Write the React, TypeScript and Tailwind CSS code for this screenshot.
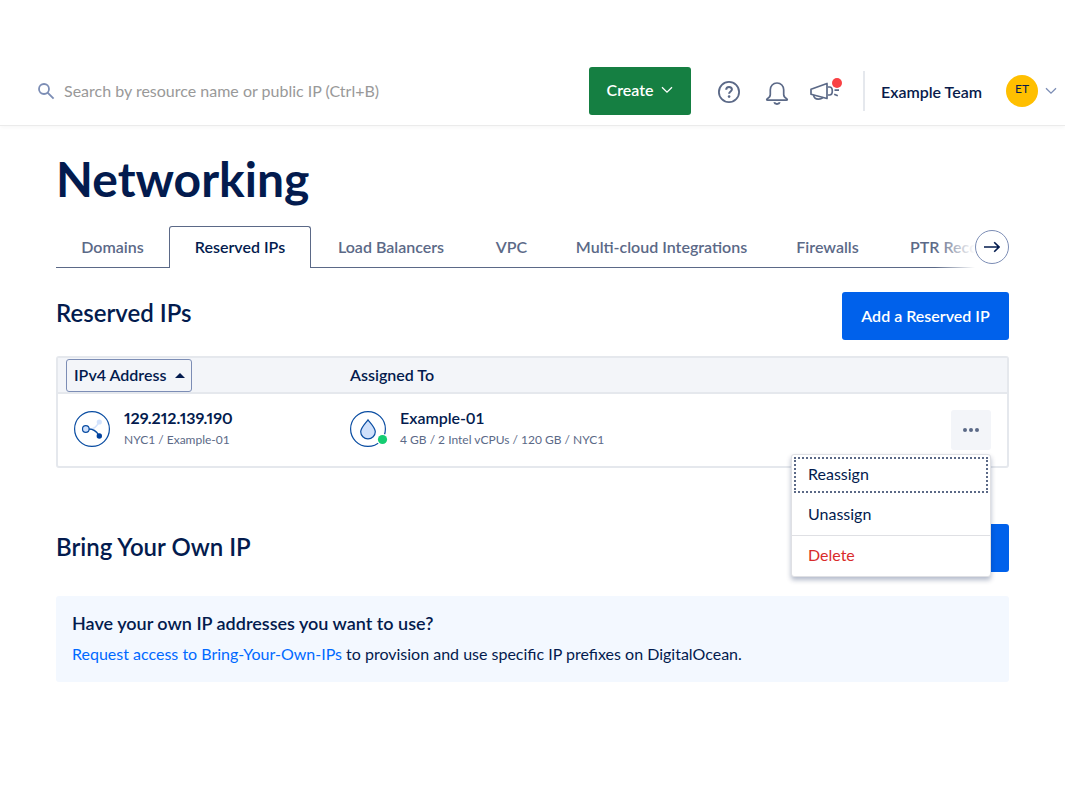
import { useState } from "react";
import clsx from "clsx";

const tabs = [
  { label: "Domains", width: "w-[113px]" },
  { label: "Reserved IPs", width: "w-[142px]" },
  { label: "Load Balancers", width: "w-40" },
  { label: "VPC", width: "w-[81px]" },
  { label: "Multi-cloud Integrations", width: "w-[219px]" },
  { label: "Firewalls", width: "w-[113px]" },
  { label: "PTR Records", width: "w-[142px]" },
];

function Chevron({ className }: { className?: string }) {
  return (
    <svg className={className} width="12" height="8" viewBox="0 0 12 8" fill="none" stroke="currentColor" strokeWidth="1.3">
      <path d="M1 1.2l5 5 5-5" />
    </svg>
  );
}

function Header() {
  return (
    <header className="mt-14 flex h-[70px] items-center border-b border-[#ebebeb] pr-2 pl-[38px] shadow-[0_2px_4px_rgba(0,0,0,0.03)]">
      <label htmlFor="search" aria-label="Search" className="pt-0.5 text-[#7c8db5]">
        <svg width="17" height="17" viewBox="0 0 17 17" fill="none" stroke="currentColor">
          <circle cx="6" cy="6" r="5" strokeWidth="1.8" />
          <path d="M9.6 9.6l6 6" strokeWidth="1.8" />
        </svg>
      </label>
      <input
        id="search"
        type="text"
        placeholder="Search by resource name or public IP (Ctrl+B)"
        className="ml-[9px] min-w-0 flex-1 text-base text-[#031b4e] outline-none placeholder:text-[#999]"
      />
      <button className="flex h-12 w-[102px] shrink-0 items-center justify-center gap-2 rounded-[3px] bg-[#157f42] pb-0.5 text-base font-semibold text-white">
        Create
        <Chevron />
      </button>
      <button aria-label="Help" className="ml-[26px] pt-0.5 text-[#5b6987]">
        <svg width="24" height="24" viewBox="0 0 24 24" fill="none" stroke="currentColor" strokeWidth="1.8">
          <circle cx="12" cy="12" r="10.1" />
          <path d="M9.2 9.8c0-1.7 1.1-2.8 2.8-2.8s2.9 1 2.9 2.5c0 1.9-2.8 2-2.8 4.3" strokeWidth="2" />
          <circle cx="12.1" cy="16.6" r="1.3" fill="currentColor" stroke="none" />
        </svg>
      </button>
      <button aria-label="Notifications" className="ml-6 pt-1 text-[#5b6987]">
        <svg width="24" height="24" viewBox="0 0 24 24" fill="none" stroke="currentColor" strokeWidth="1.7">
          <path d="M12 2C8 2 5.3 5 5.3 8.8V13.5C5.3 15.500 4.300 16.600 2.600 17.400C1.300 18.100 1.500 19.200 2.700 19.200H21.300C22.500 19.200 22.700 18.100 21.400 17.400C19.700 16.600 18.700 15.500 18.700 13.500V8.800C18.700 5 16 2 12 2Z" />
          <path d="M9.2 21.200a2.900 2.300 0 0 0 5.600 0" strokeWidth="2" />
        </svg>
      </button>
      <button aria-label="What's new" className="ml-5 text-[#5b6987]">
        <svg width="34" height="30" viewBox="0 0 34 30" fill="none" stroke="currentColor" strokeWidth="1.7">
          <path d="M2 13.300L18 7.500V22.500L2 18.200Z" strokeLinejoin="round" />
          <path d="M19 11h1.500c1.700 0 2.800 1.800 2.800 4s-1.100 4-2.800 4H19" />
          <path d="M4.600 19.200c.3 2.300 2 4 4.600 4s4.500-1.200 4.900-2" />
          <path d="M25.500 14.200h4.500M25.200 18.200l3.600 1.500" />
          <circle cx="28" cy="7" r="5" fill="#f94144" stroke="none" />
        </svg>
      </button>
      <div className="ml-5 h-10 w-0.5 bg-[#e5e8ed]" />
      <button className="ml-4 flex shrink-0 items-center text-base font-semibold text-[#081b4b]">
        <span className="w-[125px] pt-0.5 text-left">Example Team</span>
        <span className="flex size-8 items-center justify-center rounded-full bg-[#ffbf00] pb-1 text-xs font-normal">ET</span>
        <Chevron className="ml-[7px] text-[#7c8db5]" />
      </button>
    </header>
  );
}

function TabBar() {
  const [active, setActive] = useState("Reserved IPs");

  return (
    <div className="relative mt-[18px] flex overflow-hidden" role="tablist">
      {tabs.map((tab) => (
        <button
          key={tab.label}
          role="tab"
          aria-selected={active === tab.label}
          onClick={() => setActive(tab.label)}
          className={clsx(
            "h-[42px] shrink-0 text-base font-semibold whitespace-nowrap",
            tab.width,
            active === tab.label
              ? "rounded-t-[3px] border border-b-0 border-[#5b6987] pb-0.5 text-[#031b4e]"
              : "border-b border-[#5b6987] text-[#5b6987]"
          )}
        >
          {tab.label}
        </button>
      ))}
      {/* fade and scroll arrow over the end of the tab list */}
      <div className="absolute inset-y-0 right-0 flex items-center">
        <div className="h-full w-10 bg-linear-to-r from-white/0 to-white" />
        <div className="flex h-full items-center bg-white">
          <button
            aria-label="Scroll tabs right"
            className="flex size-[34px] items-center justify-center rounded-full border border-[#7c8db5] text-[#031b4e]"
          >
            <svg width="16" height="12" viewBox="0 0 16 12" fill="none" stroke="currentColor" strokeWidth="1.6">
              <path d="M0 6h15M10.200 1.200L15 6l-4.800 4.800" />
            </svg>
          </button>
        </div>
      </div>
    </div>
  );
}

function RowMenu() {
  return (
    <div className="relative ml-auto w-10">
      <button aria-label="More actions" aria-expanded="true" className="flex size-10 items-center justify-center rounded-[3px] bg-[#f3f5f9] text-[#5b6987]">
        <svg width="16" height="4" viewBox="0 0 16 4" fill="currentColor">
          <circle cx="2" cy="2" r="2" />
          <circle cx="8" cy="2" r="2" />
          <circle cx="14" cy="2" r="2" />
        </svg>
      </button>
      <div
        role="menu"
        className="absolute top-11 right-0 z-10 w-[200px] rounded-[3px] border border-[#dfe0e4] bg-white text-base text-[#031b4e] shadow-[0_3px_5px_rgba(3,27,78,0.3)]"
      >
        <div className="px-0.5 pt-0.5">
          <button role="menuitem" className="block h-9 w-full border-2 border-dotted border-[#5b6987] px-3 pb-0.5 text-left">
            Reassign
          </button>
        </div>
        <button role="menuitem" className="block h-[42px] w-full px-4 text-left">
          Unassign
        </button>
        <button role="menuitem" className="block h-[41px] w-full border-t border-[#dfe0e4] px-4 pb-0.5 text-left text-[#d92b2b]">
          Delete
        </button>
      </div>
    </div>
  );
}

function IpTable() {
  return (
    <div className="mt-4 rounded-[3px] border-2 border-[#e5e8ed]">
      <table className="w-full table-fixed text-left text-[#031b4e]">
        <thead>
          <tr className="h-[35px] border-b-2 border-[#e5e8ed] bg-[#f3f5f9]">
            <th className="w-[276px] p-0 pl-2">
              <button className="flex h-[33px] w-[126px] items-center justify-between rounded-[3px] border border-[#7c8db5] pr-1.5 pl-[7px] text-base font-semibold whitespace-nowrap">
                IPv4 Address
                <svg width="10" height="5" viewBox="0 0 10 5" fill="currentColor">
                  <path d="M0 5L5 0l5 5z" />
                </svg>
              </button>
            </th>
            <th className="p-0 pl-4 text-base font-semibold">Assigned To</th>
            <th aria-label="Actions" className="w-20 p-0" />
          </tr>
        </thead>
        <tbody>
          <tr className="h-[73px]">
            <td className="p-0 pb-0.5 pl-4">
              <div className="flex items-center gap-3.5">
                <svg className="shrink-0" width="36" height="36" viewBox="0 0 36 36" fill="none">
                  <circle cx="18" cy="18" r="17.4" stroke="#0a4da2" strokeWidth="1.2" />
                  <path d="M15 18.200c5 0 7-2 9.500-6" stroke="#d3e3fd" strokeWidth="1.5" />
                  <path d="M15 18c5 0 7.500 2.500 9.800 6" stroke="#0a4da2" strokeWidth="1.3" />
                  <circle cx="25.3" cy="11" r="2.6" fill="#d3e3fd" />
                  <circle cx="25.3" cy="25" r="2.7" fill="#00419e" />
                  <circle cx="11.8" cy="18" r="3.3" fill="#cfe0fb" stroke="#0a4da2" strokeWidth="1.2" />
                </svg>
                <div>
                  <a href="#ip" className="block text-base leading-5 font-bold proportional-nums">129.212.139.190</a>
                  <p className="mt-0.5 text-xs leading-5 text-[#5b6987]">NYC1 / Example-01</p>
                </div>
              </div>
            </td>
            <td className="p-0 pb-0.5 pl-4">
              <div className="flex items-center gap-3">
                <svg className="shrink-0" width="38" height="36" viewBox="0 0 38 36" fill="none">
                  <circle cx="18" cy="18" r="17.4" stroke="#0a4da2" strokeWidth="1.2" />
                  <path d="M18 8.800c3.200 4.200 7.300 8 7.300 12a7.300 7 0 0 1-14.600 0c0-4 4.100-7.800 7.300-12z" fill="#cfe0fb" stroke="#0a4da2" strokeWidth="1.2" />
                  <circle cx="32.5" cy="28.5" r="5.8" fill="#fff" />
                  <circle cx="32.5" cy="28.5" r="4.6" fill="#15cd72" />
                </svg>
                <div>
                  <a href="#droplet" className="block text-base leading-5 font-semibold">Example-01</a>
                  <p className="mt-0.5 text-xs leading-5 text-[#5b6987]">4 GB / 2 Intel vCPUs / 120 GB / NYC1</p>
                </div>
              </div>
            </td>
            <td className="p-0 pr-4">
              <RowMenu />
            </td>
          </tr>
        </tbody>
      </table>
    </div>
  );
}

export default function App() {
  return (
    <div className="flow-root min-h-screen bg-white font-['Lato','Liberation_Sans',sans-serif] text-[#031b4e]">
      <Header />
      <main className="px-14 pt-6">
        <h1 className="text-5xl leading-[58px] font-bold">Networking</h1>
        <TabBar />

        <section className="mt-6">
          <div className="flex justify-between">
            <h2 className="text-2xl leading-[42px] font-semibold">Reserved IPs</h2>
            <button className="h-12 w-[167px] rounded-[3px] bg-[#0061eb] text-base font-semibold text-white">
              Add a Reserved IP
            </button>
          </div>
          <IpTable />
        </section>

        <section className="mt-14">
          <div className="flex justify-between">
            <h2 className="text-2xl leading-[46px] font-semibold">Bring Your Own IP</h2>
            <button aria-label="Bring your own IP" className="h-12 w-[167px] rounded-[3px] bg-[#0061eb]" />
          </div>
          <div className="mt-6 rounded-[3px] bg-[#f3f8ff] px-4 pt-3.5 pb-4">
            <h3 className="text-lg leading-[26px] font-semibold">Have your own IP addresses you want to use?</h3>
            <p className="mt-1.5 text-base leading-6">
              <a href="#byoip" className="text-[#0069ff]">Request access to Bring-Your-Own-IPs</a> to provision and use
              specific IP prefixes on DigitalOcean.
            </p>
          </div>
        </section>
      </main>
    </div>
  );
}
